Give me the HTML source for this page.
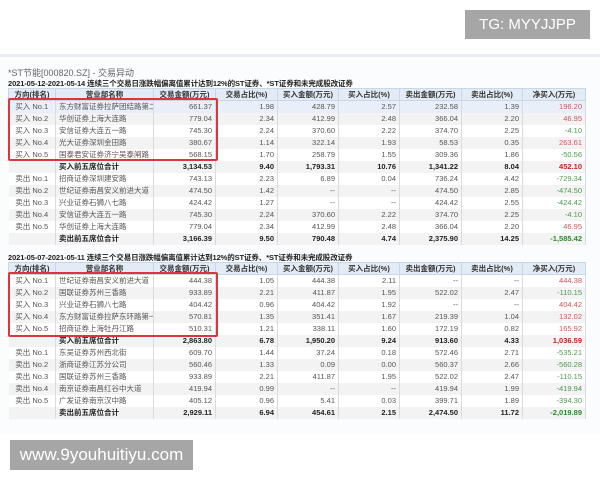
<!DOCTYPE html>
<html><head><meta charset="utf-8"><style>
*{margin:0;padding:0;box-sizing:border-box}
body{width:600px;height:480px;background:#fff;position:relative;overflow:hidden;font-family:"Liberation Sans","Noto Sans CJK SC",sans-serif;color:#333}
.tg{position:absolute;left:465px;top:10px;width:125px;height:29px;background:#a6a6a6;color:#fff;font-size:15px;line-height:29px;text-align:center}
.panel{position:absolute;left:0;top:54px;width:600px;height:380px;background:#fbfcfd;border-top:3px solid #e8eef5}
.st{position:absolute;left:8px;top:66px;font-size:9px;color:#666}
.ti{position:absolute;left:8px;font-size:7.5px;font-weight:bold;color:#222;white-space:nowrap;letter-spacing:-0.1px}
table{position:absolute;left:8px;border-collapse:collapse;table-layout:fixed;width:577px;font-size:7.5px}
td{height:12px;line-height:11px;border-right:1px solid #d5dce5;padding:0 3px;white-space:nowrap;overflow:hidden;color:#555}
tr.h td{background:#e3ecf6;text-align:center;font-weight:bold;color:#333;border:1px solid #c9d6e6}
tr:nth-child(odd):not(.h) td{background:#f3f3f3}
tr:nth-child(even) td{background:#fff}
tr.b1 td{background:#e8eff8!important}
td.c{text-align:center}
td.r{text-align:right}
tr.s td{font-weight:bold;color:#222}
.p{color:#d2555a!important}.g{color:#4d9a4d!important}
tr.s .p{color:#d01c1c!important}tr.s .g{color:#2d8a2d!important}
.box{position:absolute;left:8px;width:210px;border:2px solid #d9363e;border-radius:2px}
.wm{position:absolute;left:10px;top:440px;width:183px;height:30px;background:#a6a6a6;color:#fff;font-size:17px;line-height:30px;text-align:center}
</style></head><body>
<div class="tg">TG: MYYJJPP</div>
<div class="panel"></div>
<div class="st">*ST节能[000820.SZ] - 交易异动</div>
<div class="ti" style="top:78px">2021-05-12-2021-05-14 连续三个交易日涨跌幅偏离值累计达到12%的ST证券、*ST证券和未完成股改证券</div>
<table style="top:88px">
<colgroup><col style="width:47px"><col style="width:98px"><col style="width:62px"><col style="width:62px"><col style="width:61px"><col style="width:61px"><col style="width:62px"><col style="width:61px"><col style="width:63px"></colgroup>
<tr class="h"><td>方向(排名)</td><td>营业部名称</td><td>交易金额(万元)</td><td>交易占比(%)</td><td>买入金额(万元)</td><td>买入占比(%)</td><td>卖出金额(万元)</td><td>卖出占比(%)</td><td>净买入(万元)</td></tr>
<tr class="b1"><td class="c">买入 No.1</td><td>东方财富证券拉萨团结路第二</td><td class="r">661.37</td><td class="r">1.98</td><td class="r">428.79</td><td class="r">2.57</td><td class="r">232.58</td><td class="r">1.39</td><td class="r p">196.20</td></tr>
<tr><td class="c">买入 No.2</td><td>华创证券上海大连路</td><td class="r">779.04</td><td class="r">2.34</td><td class="r">412.99</td><td class="r">2.48</td><td class="r">366.04</td><td class="r">2.20</td><td class="r p">46.95</td></tr>
<tr><td class="c">买入 No.3</td><td>安信证券大连五一路</td><td class="r">745.30</td><td class="r">2.24</td><td class="r">370.60</td><td class="r">2.22</td><td class="r">374.70</td><td class="r">2.25</td><td class="r g">-4.10</td></tr>
<tr><td class="c">买入 No.4</td><td>光大证券深圳金田路</td><td class="r">380.67</td><td class="r">1.14</td><td class="r">322.14</td><td class="r">1.93</td><td class="r">58.53</td><td class="r">0.35</td><td class="r p">263.61</td></tr>
<tr><td class="c">买入 No.5</td><td>国泰君安证券济宁吴泰闸路</td><td class="r">568.15</td><td class="r">1.70</td><td class="r">258.79</td><td class="r">1.55</td><td class="r">309.36</td><td class="r">1.86</td><td class="r g">-50.56</td></tr>
<tr class="s"><td></td><td>买入前五席位合计</td><td class="r">3,134.53</td><td class="r">9.40</td><td class="r">1,793.31</td><td class="r">10.76</td><td class="r">1,341.22</td><td class="r">8.04</td><td class="r p">452.10</td></tr>
<tr><td class="c">卖出 No.1</td><td>招商证券深圳建安路</td><td class="r">743.13</td><td class="r">2.23</td><td class="r">6.89</td><td class="r">0.04</td><td class="r">736.24</td><td class="r">4.42</td><td class="r g">-729.34</td></tr>
<tr><td class="c">卖出 No.2</td><td>世纪证券南昌安义前进大道</td><td class="r">474.50</td><td class="r">1.42</td><td class="r">--</td><td class="r">--</td><td class="r">474.50</td><td class="r">2.85</td><td class="r g">-474.50</td></tr>
<tr><td class="c">卖出 No.3</td><td>兴业证券石狮八七路</td><td class="r">424.42</td><td class="r">1.27</td><td class="r">--</td><td class="r">--</td><td class="r">424.42</td><td class="r">2.55</td><td class="r g">-424.42</td></tr>
<tr><td class="c">卖出 No.4</td><td>安信证券大连五一路</td><td class="r">745.30</td><td class="r">2.24</td><td class="r">370.60</td><td class="r">2.22</td><td class="r">374.70</td><td class="r">2.25</td><td class="r g">-4.10</td></tr>
<tr><td class="c">卖出 No.5</td><td>华创证券上海大连路</td><td class="r">779.04</td><td class="r">2.34</td><td class="r">412.99</td><td class="r">2.48</td><td class="r">366.04</td><td class="r">2.20</td><td class="r p">46.95</td></tr>
<tr class="s"><td></td><td>卖出前五席位合计</td><td class="r">3,166.39</td><td class="r">9.50</td><td class="r">790.48</td><td class="r">4.74</td><td class="r">2,375.90</td><td class="r">14.25</td><td class="r g">-1,585.42</td></tr>
</table>
<div class="box" style="top:98px;height:63px"></div>

<div class="ti" style="top:252px">2021-05-07-2021-05-11 连续三个交易日涨跌幅偏离值累计达到12%的ST证券、*ST证券和未完成股改证券</div>
<table style="top:262px">
<colgroup><col style="width:47px"><col style="width:98px"><col style="width:62px"><col style="width:62px"><col style="width:61px"><col style="width:61px"><col style="width:62px"><col style="width:61px"><col style="width:63px"></colgroup>
<tr class="h"><td>方向(排名)</td><td>营业部名称</td><td>交易金额(万元)</td><td>交易占比(%)</td><td>买入金额(万元)</td><td>买入占比(%)</td><td>卖出金额(万元)</td><td>卖出占比(%)</td><td>净买入(万元)</td></tr>
<tr><td class="c">买入 No.1</td><td>世纪证券南昌安义前进大道</td><td class="r">444.38</td><td class="r">1.05</td><td class="r">444.38</td><td class="r">2.11</td><td class="r">--</td><td class="r">--</td><td class="r p">444.38</td></tr>
<tr><td class="c">买入 No.2</td><td>国联证券苏州三香路</td><td class="r">933.89</td><td class="r">2.21</td><td class="r">411.87</td><td class="r">1.95</td><td class="r">522.02</td><td class="r">2.47</td><td class="r g">-110.15</td></tr>
<tr><td class="c">买入 No.3</td><td>兴业证券石狮八七路</td><td class="r">404.42</td><td class="r">0.96</td><td class="r">404.42</td><td class="r">1.92</td><td class="r">--</td><td class="r">--</td><td class="r p">404.42</td></tr>
<tr><td class="c">买入 No.4</td><td>东方财富证券拉萨东环路第一</td><td class="r">570.81</td><td class="r">1.35</td><td class="r">351.41</td><td class="r">1.67</td><td class="r">219.39</td><td class="r">1.04</td><td class="r p">132.02</td></tr>
<tr><td class="c">买入 No.5</td><td>招商证券上海牡丹江路</td><td class="r">510.31</td><td class="r">1.21</td><td class="r">338.11</td><td class="r">1.60</td><td class="r">172.19</td><td class="r">0.82</td><td class="r p">165.92</td></tr>
<tr class="s"><td></td><td>买入前五席位合计</td><td class="r">2,863.80</td><td class="r">6.78</td><td class="r">1,950.20</td><td class="r">9.24</td><td class="r">913.60</td><td class="r">4.33</td><td class="r p">1,036.59</td></tr>
<tr><td class="c">卖出 No.1</td><td>东吴证券苏州西北街</td><td class="r">609.70</td><td class="r">1.44</td><td class="r">37.24</td><td class="r">0.18</td><td class="r">572.46</td><td class="r">2.71</td><td class="r g">-535.21</td></tr>
<tr><td class="c">卖出 No.2</td><td>浙商证券江苏分公司</td><td class="r">560.46</td><td class="r">1.33</td><td class="r">0.09</td><td class="r">0.00</td><td class="r">560.37</td><td class="r">2.66</td><td class="r g">-560.28</td></tr>
<tr><td class="c">卖出 No.3</td><td>国联证券苏州三香路</td><td class="r">933.89</td><td class="r">2.21</td><td class="r">411.87</td><td class="r">1.95</td><td class="r">522.02</td><td class="r">2.47</td><td class="r g">-110.15</td></tr>
<tr><td class="c">卖出 No.4</td><td>南京证券南昌红谷中大道</td><td class="r">419.94</td><td class="r">0.99</td><td class="r">--</td><td class="r">--</td><td class="r">419.94</td><td class="r">1.99</td><td class="r g">-419.94</td></tr>
<tr><td class="c">卖出 No.5</td><td>广发证券南京汉中路</td><td class="r">405.12</td><td class="r">0.96</td><td class="r">5.41</td><td class="r">0.03</td><td class="r">399.71</td><td class="r">1.89</td><td class="r g">-394.30</td></tr>
<tr class="s"><td></td><td>卖出前五席位合计</td><td class="r">2,929.11</td><td class="r">6.94</td><td class="r">454.61</td><td class="r">2.15</td><td class="r">2,474.50</td><td class="r">11.72</td><td class="r g">-2,019.89</td></tr>
</table>
<div class="box" style="top:272px;height:65px"></div>
<div class="wm">www.9youhuitiyu.com</div>
</body></html>
